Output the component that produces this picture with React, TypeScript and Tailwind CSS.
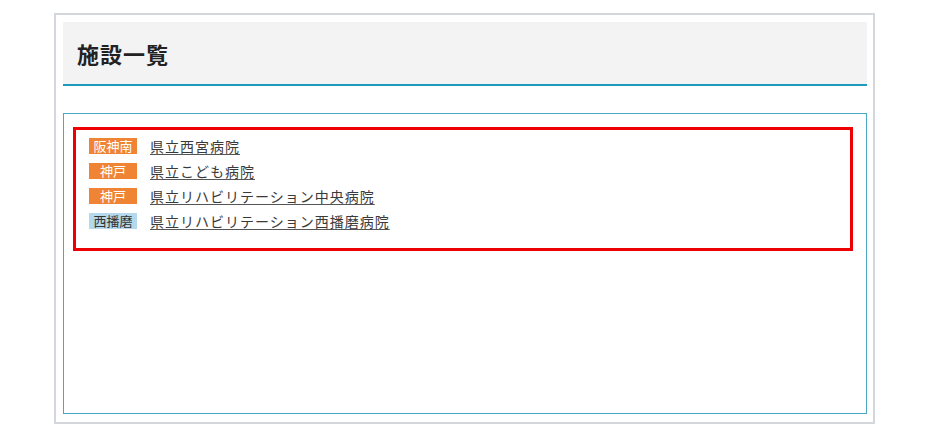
import React from "react";

const rows = [
  { area: "阪神南", kind: "orange", name: "県立西宮病院" },
  { area: "神戸", kind: "orange", name: "県立こども病院" },
  { area: "神戸", kind: "orange", name: "県立リハビリテーション中央病院" },
  { area: "西播磨", kind: "blue", name: "県立リハビリテーション西播磨病院" },
];

export default function App() {
  return (
    <div
      className="w-[930px] h-[441px] bg-white pt-[13px] pl-[54px]"
      style={{ fontFamily: '"Noto Sans CJK JP", "Noto Sans", sans-serif' }}
    >
      <div className="w-[821px] h-[411px] border-2 border-[#d3d7dc] pt-[7px] pl-[7px] pr-[6px]">
        <div className="h-[64px] bg-[#f3f3f3] border-b-2 border-[#1e9abb] flex items-center pl-[14px]">
          <h1 className="text-[22px] font-bold text-[#222] leading-none tracking-[1px]">施設一覧</h1>
        </div>
        <div className="mt-[27px] h-[301px] border border-[#4aa8c2] pt-[13px] pl-[9px]">
          <div className="w-[780px] h-[124px] border-[3px] border-[#ee0000] pt-[3px] pl-[13px]">
            {rows.map((r, i) => (
              <div key={i} className="h-[25px] flex items-center">
                <span
                  className={
                    r.kind === "orange"
                      ? "w-[48px] h-[16px] flex items-center justify-center bg-[#ef8534] text-white text-[13px] leading-none"
                      : "w-[48px] h-[16px] flex items-center justify-center bg-[#b5d9ec] text-[#333] text-[13px] leading-none"
                  }
                >
                  {r.area}
                </span>
                <a
                  href="#"
                  className="ml-[13px] text-[14px] tracking-[1px] text-[#3a3a3a] underline underline-offset-2 decoration-[#555] leading-none"
                >
                  {r.name}
                </a>
              </div>
            ))}
          </div>
        </div>
      </div>
    </div>
  );
}
